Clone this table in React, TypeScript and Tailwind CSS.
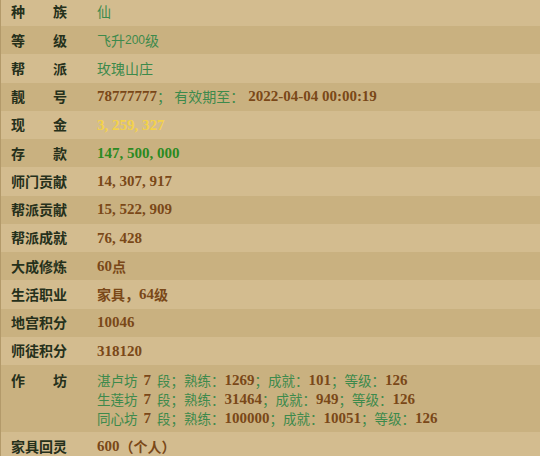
import React from "react";

const LIGHT = "bg-[#d3bc8f]";
const DARK = "bg-[#c9b180]";

const G = ({ children, s = "text-[14px]" }: { children: React.ReactNode; s?: string }) => (
  <span className={`text-[#3d8a4c] font-normal ${s}`}>{children}</span>
);
const N = ({ children, c = "text-[#7a4818]" }: { children: React.ReactNode; c?: string }) => (
  <span className={`${c} font-bold text-[15px] font-['Liberation_Serif','Noto_Sans_CJK_SC',serif]`}>{children}</span>
);
const BC = ({ children }: { children: React.ReactNode }) => (
  <span className="text-[#7a4818] font-bold text-[14px]">{children}</span>
);

function Label({ text }: { text: string }) {
  const chars = text.split("");
  return (
    <div className="w-[56px] shrink-0 flex justify-between text-[#25301b] font-bold text-[14px]">
      {chars.map((c, i) => (
        <span key={i}>{c}</span>
      ))}
    </div>
  );
}

function Row({ label, bg, children }: { label: string; bg: string; children: React.ReactNode }) {
  return (
    <div className={`${bg} h-[28.25px] flex items-center pl-[10px] border-l border-[#b39a6a]`}>
      <Label text={label} />
      <div className="ml-[30px] flex items-center whitespace-pre">{children}</div>
    </div>
  );
}

function WorkLine({ name, a, b, c }: { name: string; a: string; b: string; c: string }) {
  const s = "text-[13.5px]";
  return (
    <div className="h-[19px] flex items-center whitespace-pre">
      <G s={s}>{name}</G>
      <span className="w-[6px]" />
      <N>7</N>
      <span className="w-[6px]" />
      <G s={s}>段；熟练：</G>
      <N>{a}</N>
      <G s={s}>；成就：</G>
      <N>{b}</N>
      <G s={s}>；等级：</G>
      <N>{c}</N>
    </div>
  );
}

export default function App() {
  return (
    <div className="w-[540px] h-[456px] overflow-hidden bg-[#d3bc8f] font-['Noto_Sans_CJK_SC',sans-serif]">
      <div className="mt-[-2.25px]">
        <Row label="种族" bg={LIGHT}>
          <G>仙</G>
        </Row>
        <Row label="等级" bg={DARK}>
          <G>飞升</G>
          <span className="text-[#3d8a4c] text-[12px] font-['Liberation_Sans',sans-serif]">200</span>
          <G>级</G>
        </Row>
        <Row label="帮派" bg={LIGHT}>
          <G>玫瑰山庄</G>
        </Row>
        <Row label="靓号" bg={DARK}>
          <N>78777777</N>
          <G>； 有效期至：</G>
          <span className="w-[4px]" />
          <N>2022-04-04 00:00:19</N>
        </Row>
        <Row label="现金" bg={LIGHT}>
          <N c="text-[#f3d24a]">3, 259, 327</N>
        </Row>
        <Row label="存款" bg={DARK}>
          <N c="text-[#2b8a22]">147, 500, 000</N>
        </Row>
        <Row label="师门贡献" bg={LIGHT}>
          <N>14, 307, 917</N>
        </Row>
        <Row label="帮派贡献" bg={DARK}>
          <N>15, 522, 909</N>
        </Row>
        <Row label="帮派成就" bg={LIGHT}>
          <N>76, 428</N>
        </Row>
        <Row label="大成修炼" bg={DARK}>
          <N>60</N>
          <BC>点</BC>
        </Row>
        <Row label="生活职业" bg={LIGHT}>
          <BC>家具，</BC>
          <N>64</N>
          <BC>级</BC>
        </Row>
        <Row label="地宫积分" bg={DARK}>
          <N>10046</N>
        </Row>
        <Row label="师徒积分" bg={LIGHT}>
          <N>318120</N>
        </Row>
        <div className={`${DARK} h-[67px] flex items-start pl-[10px] pt-[6px] border-l border-[#b39a6a]`}>
          <div className="h-[19px] flex items-center">
            <Label text="作坊" />
          </div>
          <div className="ml-[30px] flex flex-col">
            <WorkLine name="湛卢坊" a="1269" b="101" c="126" />
            <WorkLine name="生莲坊" a="31464" b="949" c="126" />
            <WorkLine name="同心坊" a="100000" b="10051" c="126" />
          </div>
        </div>
        <Row label="家具回灵" bg={LIGHT}>
          <N>600</N>
          <BC>（个人）</BC>
        </Row>
      </div>
    </div>
  );
}
